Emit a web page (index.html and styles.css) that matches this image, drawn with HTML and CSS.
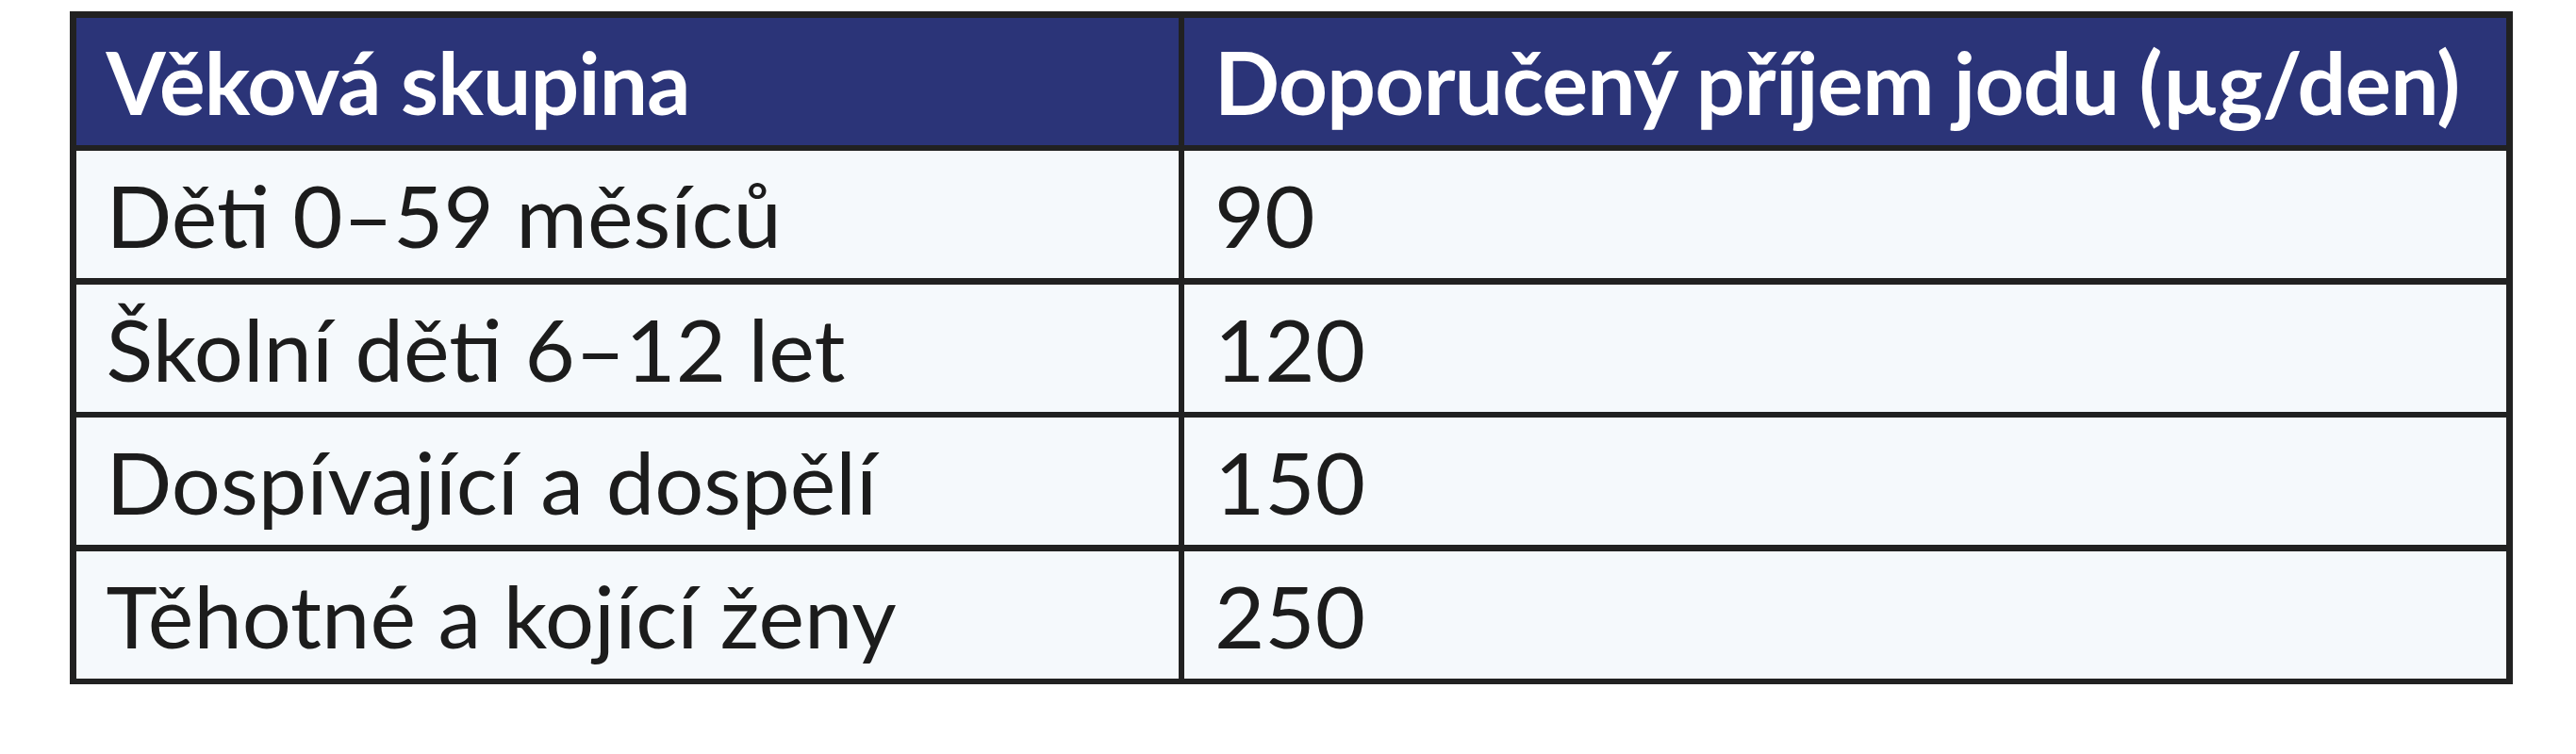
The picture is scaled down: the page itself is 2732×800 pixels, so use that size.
FILE: index.html
```html
<!DOCTYPE html>
<html lang="cs">
<head>
<meta charset="utf-8">
<title>Doporučený příjem jodu</title>
<link rel="stylesheet" href="styles.css">
</head>
<body>
<div class="table">
  <div class="cell head">Věková skupina</div>
  <div class="cell head">Doporučený příjem jodu (µg/den)</div>
  <div class="cell">Děti 0–59 měsíců</div>
  <div class="cell">90</div>
  <div class="cell">Školní děti 6–12 let</div>
  <div class="cell">120</div>
  <div class="cell">Dospívající a dospělí</div>
  <div class="cell">150</div>
  <div class="cell">Těhotné a kojící ženy</div>
  <div class="cell">250</div>
</div>
</body>
</html>
```
FILE: styles.css
```css
html, body {
  margin: 0;
  background: #ffffff;
}
body {
  padding: 12px 0 0 74px;
  font-family: Lato, "Open Sans", sans-serif;
}
.table {
  display: inline-grid;
  grid-template-columns: 1169px 1402px;
  grid-auto-rows: 135px;
  gap: 6.5px;
  padding: 6.5px;
  background: #212121;
}
.cell {
  display: flex;
  align-items: center;
  padding: 0 0 0 32px;
  background: #f5f9fc;
  color: #1c1c1c;
  font-size: 92px;
  font-weight: 400;
  white-space: nowrap;
  overflow: hidden;
}
.cell.head {
  background: #2b3478;
  color: #ffffff;
  font-size: 91px;
  font-weight: 700;
  letter-spacing: -0.8px;
}
```
